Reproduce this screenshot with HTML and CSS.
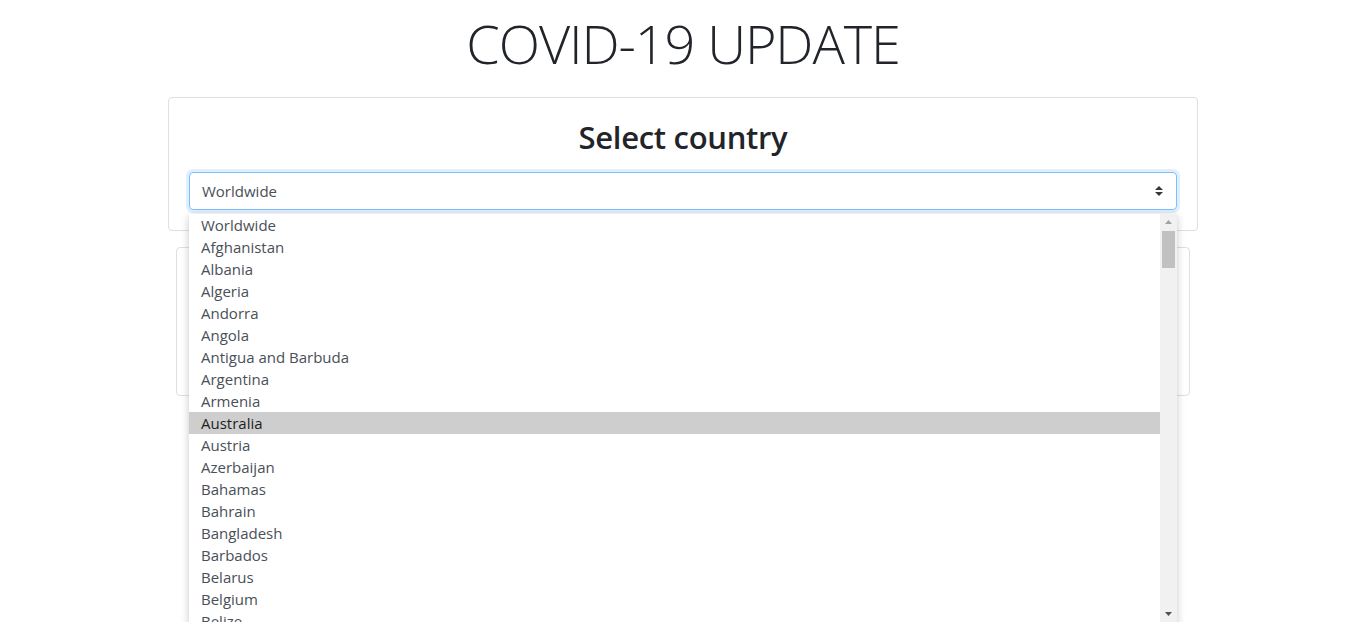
FILE: index.html
```html
<!DOCTYPE html>
<html lang="en">
<head>
<meta charset="utf-8">
<title>COVID-19 UPDATE</title>
<link rel="stylesheet" href="styles.css">
</head>
<body>
<div class="page">
  <h1 class="title">COVID-19 UPDATE</h1>
  <div class="card card-select">
    <h2 class="card-title">Select country</h2>
    <div class="select-wrap">
      <div class="select">
        <span class="select-value">Worldwide</span>
        <svg class="caret" width="8" height="10" viewBox="0 0 4 5"><path d="M2 0L0 2h4zm0 5L0 3h4z" fill="#343a40"/></svg>
      </div>
      <div class="dropdown">
        <ul class="options">
          <li>Worldwide</li>
          <li>Afghanistan</li>
          <li>Albania</li>
          <li>Algeria</li>
          <li>Andorra</li>
          <li>Angola</li>
          <li>Antigua and Barbuda</li>
          <li>Argentina</li>
          <li>Armenia</li>
          <li class="active">Australia</li>
          <li>Austria</li>
          <li>Azerbaijan</li>
          <li>Bahamas</li>
          <li>Bahrain</li>
          <li>Bangladesh</li>
          <li>Barbados</li>
          <li>Belarus</li>
          <li>Belgium</li>
          <li>Belize</li>
        </ul>
        <div class="scrollbar">
          <svg class="arrow" width="17" height="17" viewBox="0 0 17 17"><path d="M5 10h7l-3.5-4z" fill="#a3a3a3"/></svg>
          <div class="track"><div class="thumb"></div></div>
          <svg class="arrow" width="17" height="17" viewBox="0 0 17 17"><path d="M5 7h7l-3.5 4z" fill="#505050"/></svg>
        </div>
      </div>
    </div>
  </div>
  <div class="card card-stats"></div>
</div>
</body>
</html>
```
FILE: styles.css
```css
* { box-sizing: border-box; }
html, body { margin: 0; padding: 0; background: #fff; }
body {
  font-family: "Open Sans", "Noto Sans", sans-serif;
  color: #212529;
  height: 622px;
  overflow: hidden;
}
.page {
  display: flex;
  flex-direction: column;
  align-items: center;
}
.title {
  margin: 10px 0 21px;
  font-size: 54px;
  font-weight: 300;
  line-height: 66px;
  letter-spacing: -1.1px;
  color: #212529;
}
.card {
  border: 1px solid #dfdfdf;
  border-radius: 4px;
  background: #fff;
}
.card-select {
  width: 1030px;
  padding: 20px 20px 20px;
}
.card-title {
  margin: 0 0 16px;
  text-align: center;
  font-size: 31px;
  font-weight: 600;
  line-height: 38px;
  letter-spacing: -0.3px;
}
.select-wrap { position: relative; }
.select {
  height: 38px;
  border: 1px solid #80bdff;
  border-radius: 4px;
  box-shadow: 0 0 0 3px rgba(0, 123, 255, 0.12);
  display: flex;
  align-items: center;
  justify-content: space-between;
  padding: 0 13px 0 12px;
  font-size: 15px;
  color: #495057;
}
.dropdown {
  position: absolute;
  left: 0;
  right: 0;
  top: 42px;
  height: 420px;
  background: #fff;
  box-shadow: 0 2px 8px rgba(0, 0, 0, 0.22);
  display: flex;
  z-index: 10;
}
.options {
  list-style: none;
  margin: 0;
  padding: 0;
  flex: 1;
  font-size: 15px;
  color: #495057;
}
.options li {
  height: 22px;
  line-height: 22px;
  padding-left: 12px;
}
.options li.active {
  background: #cecece;
  color: #1e1e1e;
}
.scrollbar {
  width: 17px;
  background: #f1f1f1;
  display: flex;
  flex-direction: column;
  height: 408px;
}
.arrow { display: block; flex: none; }
.track { flex: 1; padding: 0 2px; }
.thumb {
  height: 37px;
  background: #c1c1c1;
}
.card-stats {
  width: 1014px;
  height: 149px;
  margin-top: 16px;
}
```
